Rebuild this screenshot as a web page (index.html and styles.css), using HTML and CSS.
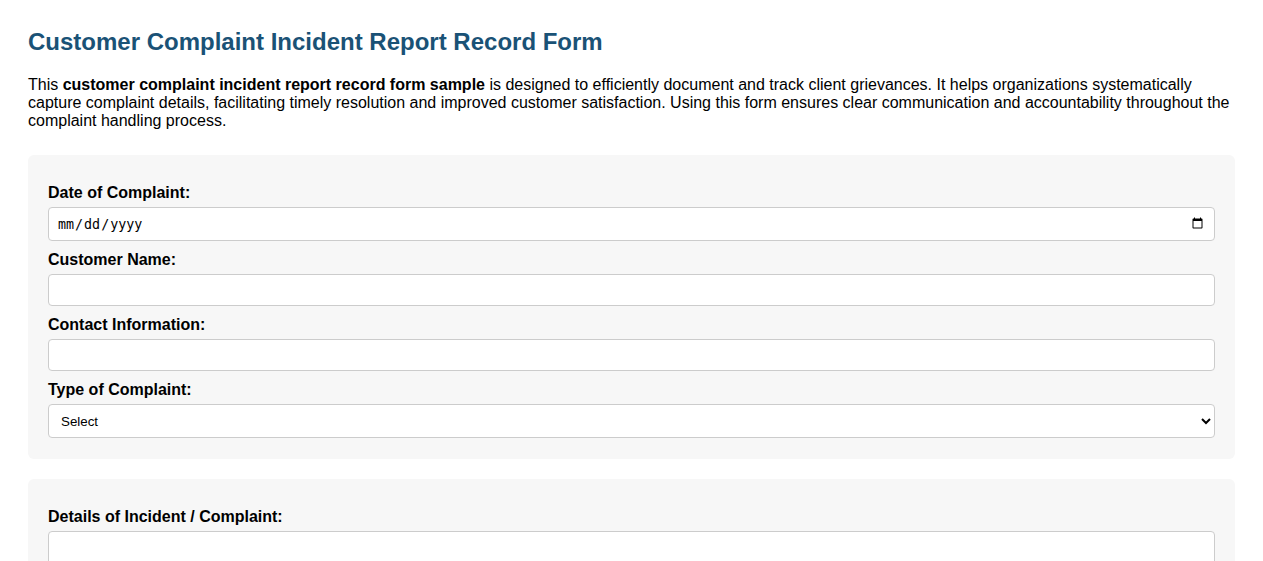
FILE: index.html
```html
<!DOCTYPE html>
<html lang="en">
<head>
    <meta charset="UTF-8">
    <meta name="viewport" content="width=device-width, initial-scale=1.0">
    <title>Customer Complaint Incident Report Record Form</title>
    <link rel="stylesheet" href="styles.css">
</head>
<body>
    <h1>Customer Complaint Incident Report Record Form</h1>
    <p class="intro">This <strong>customer complaint incident report record form sample</strong> is designed to efficiently document and track client grievances. It helps organizations systematically capture complaint details, facilitating timely resolution and improved customer satisfaction. Using this form ensures clear communication and accountability throughout the complaint handling process.</p>

    <form>
        <div class="section">
            <label for="date">Date of Complaint:</label>
            <input type="date" id="date" name="date">

            <label for="customerName">Customer Name:</label>
            <input type="text" id="customerName" name="customerName">

            <label for="contact">Contact Information:</label>
            <input type="text" id="contact" name="contact">

            <label for="type">Type of Complaint:</label>
            <select id="type" name="type">
                <option>Select</option>
                <option>Product</option>
                <option>Service</option>
                <option>Billing</option>
                <option>Other</option>
            </select>
        </div>

        <div class="section">
            <label for="details">Details of Incident / Complaint:</label>
            <textarea id="details" name="details" rows="5"></textarea>
        </div>
    </form>
</body>
</html>
```

FILE: styles.css
```css
body {
    font-family: Arial, "Liberation Sans", sans-serif;
    margin: 8px;
    padding: 20px;
    color: #000;
    background: #fff;
}

h1 {
    color: #1a5276;
    font-size: 24px;
    margin: 0 0 20px;
}

.intro {
    font-size: 16px;
    line-height: 18px;
    margin: 0 0 25px;
}

.section {
    background: #f7f7f7;
    border-radius: 6px;
    padding: 19px 20px 21px;
    margin-bottom: 20px;
}

label {
    display: block;
    font-weight: bold;
    font-size: 16px;
    line-height: 18px;
    margin: 10px 0 5px;
}

input,
select,
textarea {
    display: block;
    width: 100%;
    box-sizing: border-box;
    padding: 8px;
    border: 1px solid #ccc;
    border-radius: 4px;
    background: #fff;
}

input[type="text"] {
    height: 32px;
}

input[type="date"],
select {
    height: 34px;
}

textarea {
    resize: vertical;
}
```
